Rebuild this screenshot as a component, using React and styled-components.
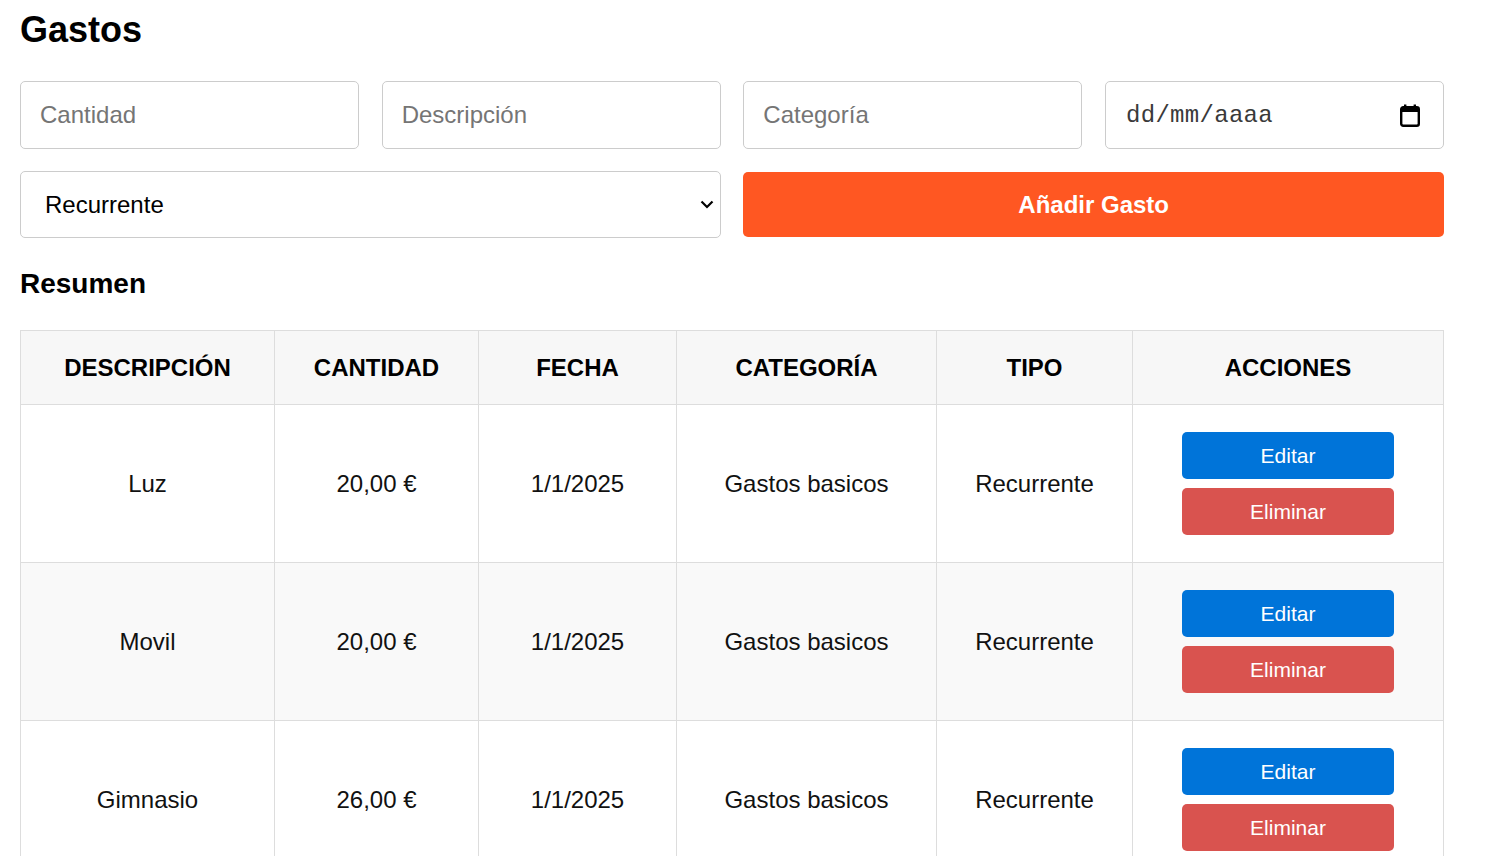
import React from "react";
import styled, { createGlobalStyle } from "styled-components";

const GlobalStyle = createGlobalStyle`
  body {
    margin: 0;
    background: #fff;
    font-family: "Liberation Sans", Arial, sans-serif;
    color: #000;
  }
`;

const gastos = [
  { descripcion: "Luz", cantidad: "20,00 €", fecha: "1/1/2025", categoria: "Gastos basicos", tipo: "Recurrente" },
  { descripcion: "Movil", cantidad: "20,00 €", fecha: "1/1/2025", categoria: "Gastos basicos", tipo: "Recurrente" },
  { descripcion: "Gimnasio", cantidad: "26,00 €", fecha: "1/1/2025", categoria: "Gastos basicos", tipo: "Recurrente" },
];

const columns = [
  { label: "Descripción", width: 254 },
  { label: "Cantidad", width: 204 },
  { label: "Fecha", width: 198 },
  { label: "Categoría", width: 260 },
  { label: "Tipo", width: 196 },
  { label: "Acciones", width: 311 },
];

const App = () => {
  return (
    <Page>
      <GlobalStyle />
      <Title>Gastos</Title>
      <Form onSubmit={(e) => e.preventDefault()}>
        <Input type="text" placeholder="Cantidad" />
        <Input type="text" placeholder="Descripción" />
        <Input type="text" placeholder="Categoría" />
        <DateField>
          <DateText>dd/mm/aaaa</DateText>
          <CalendarIcon />
        </DateField>
        <SelectWrap>
          <Select defaultValue="recurrente">
            <option value="recurrente">Recurrente</option>
            <option value="puntual">Puntual</option>
          </Select>
          <Chevron />
        </SelectWrap>
        <AddButton type="submit">Añadir Gasto</AddButton>
      </Form>

      <Subtitle>Resumen</Subtitle>
      <Table>
        <colgroup>
          {columns.map((c) => (
            <col key={c.label} style={{ width: c.width }} />
          ))}
        </colgroup>
        <thead>
          <tr>
            {columns.map((c) => (
              <Th key={c.label}>{c.label}</Th>
            ))}
          </tr>
        </thead>
        <tbody>
          {gastos.map((g, i) => (
            <Row key={g.descripcion} $striped={i % 2 === 1}>
              <Td>{g.descripcion}</Td>
              <Td>{g.cantidad}</Td>
              <Td>{g.fecha}</Td>
              <Td>{g.categoria}</Td>
              <Td>{g.tipo}</Td>
              <Td>
                <Actions>
                  <ActionButton $variant="edit">Editar</ActionButton>
                  <ActionButton $variant="delete">Eliminar</ActionButton>
                </Actions>
              </Td>
            </Row>
          ))}
        </tbody>
      </Table>
    </Page>
  );
};

const CalendarIcon = () => (
  <svg width="20" height="23" viewBox="0 0 20 23" aria-hidden="true">
    <rect x="1.2" y="3.2" width="17.6" height="18.6" rx="2" fill="none" stroke="#000" strokeWidth="2.4" />
    <rect x="1" y="3" width="18" height="5" fill="#000" />
    <rect x="4" y="0.5" width="2.4" height="4" fill="#000" />
    <rect x="13.6" y="0.5" width="2.4" height="4" fill="#000" />
  </svg>
);

const Chevron = () => (
  <ChevronSvg width="14" height="9" viewBox="0 0 14 9" aria-hidden="true">
    <path d="M1.5 1.5 L7 7 L12.5 1.5" fill="none" stroke="#000" strokeWidth="2.2" />
  </ChevronSvg>
);

const Page = styled.div`
  padding: 9px 20px 0;
  width: 1424px;
`;

const Title = styled.h1`
  margin: 0;
  font-size: 36px;
  font-weight: bold;
  line-height: normal;
`;

const Form = styled.form`
  display: grid;
  grid-template-columns: repeat(4, minmax(0, 1fr));
  column-gap: 22.67px;
  row-gap: 22px;
  margin-top: 30px;
  align-items: center;
`;

const Input = styled.input`
  box-sizing: border-box;
  width: 100%;
  min-width: 0;
  height: 68px;
  padding: 0 19px;
  border: 1px solid #ccc;
  border-radius: 5px;
  font-family: "Liberation Sans", Arial, sans-serif;
  font-size: 24px;
  color: #000;
  outline: none;
  &::placeholder {
    color: #757575;
  }
`;

const DateField = styled.div`
  box-sizing: border-box;
  min-width: 0;
  height: 68px;
  padding: 0 23px 0 20px;
  border: 1px solid #ccc;
  border-radius: 5px;
  display: flex;
  align-items: center;
  justify-content: space-between;
`;

const DateText = styled.span`
  font-family: "Liberation Mono", "Courier New", monospace;
  font-size: 24px;
  font-weight: 300;
  color: #3a3a3a;
  letter-spacing: 0.3px;
  padding-top: 1px;
`;

const SelectWrap = styled.div`
  grid-column: span 2;
  position: relative;
`;

const Select = styled.select`
  box-sizing: border-box;
  width: 100%;
  height: 67px;
  padding: 0 24px;
  border: 1px solid #ccc;
  border-radius: 5px;
  background: #fff;
  appearance: none;
  font-family: "Liberation Sans", Arial, sans-serif;
  font-size: 24px;
  color: #000;
  outline: none;
`;

const ChevronSvg = styled.svg`
  position: absolute;
  right: 7px;
  top: 29px;
  pointer-events: none;
`;

const AddButton = styled.button`
  grid-column: span 2;
  height: 65px;
  border: none;
  border-radius: 5px;
  background: #ff5722;
  color: #fff;
  font-family: "Liberation Sans", Arial, sans-serif;
  font-size: 24px;
  font-weight: bold;
  cursor: pointer;
`;

const Subtitle = styled.h3`
  margin: 30px 0 30px;
  font-size: 28px;
  font-weight: bold;
  line-height: normal;
`;

const Table = styled.table`
  width: 1423px;
  border-collapse: collapse;
  table-layout: fixed;
`;

const Th = styled.th`
  padding: 22.5px 0;
  border: 1px solid #ddd;
  background: #f7f7f7;
  font-size: 24px;
  font-weight: bold;
  text-transform: uppercase;
  text-align: center;
  color: #000;
`;

const Row = styled.tr`
  background: ${({ $striped }) => ($striped ? "#f9f9f9" : "#fff")};
`;

const Td = styled.td`
  padding: 22.5px 0;
  border: 1px solid #ddd;
  font-size: 24px;
  text-align: center;
  vertical-align: middle;
  color: #111;
`;

const Actions = styled.div`
  display: flex;
  flex-direction: column;
  align-items: center;
  gap: 9px;
  padding: 4.5px 0;
`;

const ActionButton = styled.button`
  width: 212px;
  height: 47px;
  border: none;
  border-radius: 5px;
  background: ${({ $variant }) => ($variant === "delete" ? "#d9534f" : "#0074d9")};
  color: #fff;
  font-family: "Liberation Sans", Arial, sans-serif;
  font-size: 21px;
  cursor: pointer;
`;

export default App;
